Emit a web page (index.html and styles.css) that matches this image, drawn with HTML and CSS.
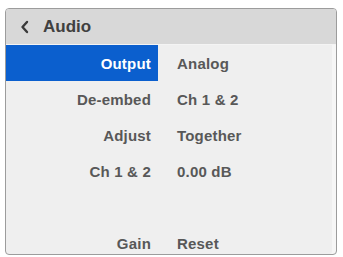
FILE: index.html
```html
<!DOCTYPE html>
<html lang="en">
<head>
    <meta charset="UTF-8">
    <title>Audio</title>
    <link rel="stylesheet" href="styles.css">
</head>
<body>
    <div class="panel">
        <div class="header">
            <svg class="back" width="10" height="14" viewBox="0 0 10 14">
                <polyline points="7,2 2.5,7 7,12" fill="none" stroke="#3a3a3a" stroke-width="2.4" stroke-linecap="round" stroke-linejoin="round"/>
            </svg>
            <span class="title">Audio</span>
        </div>
        <div class="row active">
            <div class="label">Output</div>
            <div class="value">Analog</div>
        </div>
        <div class="row">
            <div class="label">De-embed</div>
            <div class="value">Ch 1 &amp; 2</div>
        </div>
        <div class="row">
            <div class="label">Adjust</div>
            <div class="value">Together</div>
        </div>
        <div class="row">
            <div class="label">Ch 1 &amp; 2</div>
            <div class="value">0.00 dB</div>
        </div>
        <div class="row">
            <div class="label"></div>
            <div class="value"></div>
        </div>
        <div class="row">
            <div class="label">Gain</div>
            <div class="value">Reset</div>
        </div>
    </div>
</body>
</html>
```

FILE: styles.css
```css
body {
    margin: 0;
    padding: 8px 6px 0 5px;
    background: #ffffff;
    font-family: 'Liberation Sans', Arial, sans-serif;
}

.panel {
    height: 245px;
    background: #efefef;
    border: 1px solid #9c9c9c;
    border-radius: 4px;
    overflow: hidden;
    box-shadow: inset -4px 0 0 #f6f6f6;
}

.header {
    height: 35px;
    background: #d8d8d8;
    border-bottom: 1px solid #f4f4f4;
    display: flex;
    align-items: center;
    padding-left: 14px;
}

.back {
    margin-right: 13px;
}

.title {
    font-size: 17px;
    font-weight: bold;
    color: #404040;
}

.row {
    height: 36px;
    display: flex;
    align-items: center;
    font-size: 15px;
    font-weight: bold;
    color: #585858;
    letter-spacing: 0.2px;
}

.label {
    width: 145px;
    padding-right: 7px;
    text-align: right;
    align-self: stretch;
    display: flex;
    align-items: center;
    justify-content: flex-end;
}

.value {
    padding-left: 19px;
}

.row.active .label {
    background: #0b5fce;
    color: #ffffff;
}
```
